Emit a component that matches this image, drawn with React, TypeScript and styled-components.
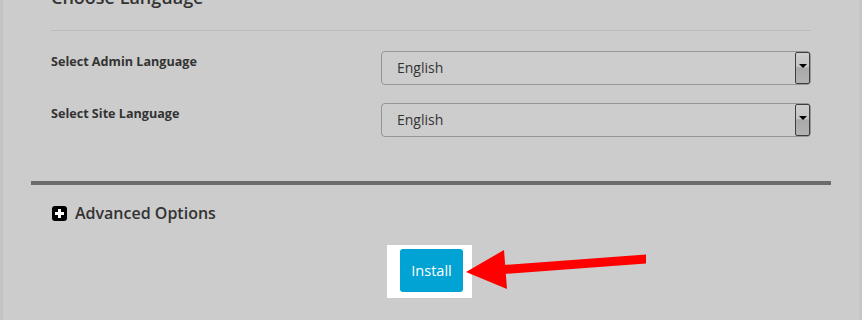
import React from 'react';
import styled, { createGlobalStyle } from 'styled-components';

const GlobalStyle = createGlobalStyle`
  html, body {
    margin: 0;
    padding: 0;
    background: #cccccc;
    overflow: hidden;
  }
  body {
    font-family: "Open Sans", "Liberation Sans", sans-serif;
    color: #333333;
  }
`;

const Frame = styled.div`
  position: relative;
  width: 862px;
  height: 320px;
  box-sizing: border-box;
  border-left: 3px solid #c3c3c3;
  border-right: 3px solid #c6c6c6;
  padding: 0 28px;
  overflow: hidden;
`;

const Section = styled.div`
  padding: 0 20px;
`;

const Title = styled.h3`
  margin: -15px 0 0;
  font-size: 18px;
  line-height: 24px;
  font-weight: 600;
  color: #333333;
`;

const ThinRule = styled.hr`
  margin: 21px 0 20px;
  border: 0;
  border-top: 1px solid #bcbcbc;
  height: 0;
`;

const Row = styled.div`
  display: flex;
  align-items: flex-start;
  height: 34px;
  margin-bottom: 18px;
`;

const Label = styled.label`
  width: 330px;
  padding-top: 3px;
  font-size: 12.6px;
  line-height: 16px;
  font-weight: 700;
  color: #333333;
`;

const SelectBox = styled.div`
  flex: 1;
  display: flex;
  align-items: stretch;
  height: 34px;
  box-sizing: border-box;
  border: 1px solid #959595;
  border-radius: 4px;
  background: #cdcdcd;
`;

const SelectValue = styled.span`
  flex: 1;
  padding-left: 15px;
  font-size: 14px;
  line-height: 32px;
  color: #333333;
`;

const DropButton = styled.span`
  width: 15px;
  box-sizing: border-box;
  border: 1px solid #3e3e3e;
  border-radius: 2px;
  background: linear-gradient(#cfcfcf 0%, #c4c4c4 45%, #a9a9a9 50%, #b3b3b3 100%);
  display: flex;
  justify-content: center;
  padding-top: 11px;
`;

const Caret = styled.span`
  width: 0;
  height: 0;
  border-left: 4px solid transparent;
  border-right: 4px solid transparent;
  border-top: 4px solid #000000;
`;

const ThickRule = styled.hr`
  margin: 44px 0 0;
  border: 0;
  height: 4px;
  background: #6b6b6b;
`;

const Advanced = styled.div`
  display: flex;
  align-items: center;
  gap: 8px;
  padding: 16px 0 0 21px;
  font-size: 16px;
  line-height: 24px;
  font-weight: 600;
  color: #333333;
`;

const PlusIcon = styled.span`
  width: 15px;
  height: 15px;
  border-radius: 3px;
  background: #000000;
  display: inline-flex;
  align-items: center;
  justify-content: center;
`;

const ButtonArea = styled.div`
  display: flex;
  justify-content: center;
  padding-top: 20px;
`;

const Highlight = styled.div`
  background: #ffffff;
  padding: 4px 9px 6px 13px;
  margin-left: -3px;
`;

const InstallButton = styled.button`
  width: 63px;
  height: 43px;
  border: 0;
  border-radius: 3px;
  background: #00a3d4;
  color: #ffffff;
  font-family: "Open Sans", "Liberation Sans", sans-serif;
  font-size: 14.5px;
  padding: 0;
`;

const Arrow = styled.svg`
  position: absolute;
  left: 460px;
  top: 245px;
`;

const languages = [
  { label: 'Select Admin Language', value: 'English' },
  { label: 'Select Site Language', value: 'English' },
];

export default function App() {
  return (
    <>
      <GlobalStyle />
      <Frame>
        <Section>
          <Title>Choose Language</Title>
          <ThinRule />
          {languages.map((l) => (
            <Row key={l.label}>
              <Label>{l.label}</Label>
              <SelectBox>
                <SelectValue>{l.value}</SelectValue>
                <DropButton>
                  <Caret />
                </DropButton>
              </SelectBox>
            </Row>
          ))}
        </Section>
        <ThickRule />
        <Advanced>
          <PlusIcon>
            <svg width="9" height="9" viewBox="0 0 9 9">
              <path d="M3 0h3v3h3v3H6v3H3V6H0V3h3z" fill="#ffffff" />
            </svg>
          </PlusIcon>
          Advanced Options
        </Advanced>
        <ButtonArea>
          <Highlight>
            <InstallButton>Install</InstallButton>
          </Highlight>
        </ButtonArea>
        <Arrow width="190" height="50" viewBox="0 0 190 50">
          <polygon points="3,27 41,5 44,44" fill="#ff0000" />
          <polygon points="40,20 183,9.5 183,18.5 40,29" fill="#ff0000" />
        </Arrow>
      </Frame>
    </>
  );
}
